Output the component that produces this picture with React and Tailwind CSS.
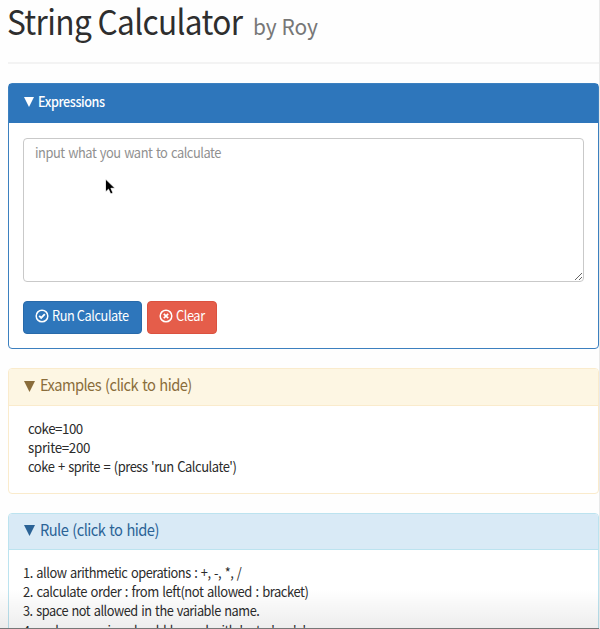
import React from "react";

function Triangle({ className }) {
  return (
    <svg className={className} viewBox="0 0 10 10" preserveAspectRatio="none" fill="currentColor" aria-hidden="true">
      <path d="M0 0H10L5 10Z" />
    </svg>
  );
}

function CircleIcon({ children }) {
  return (
    <svg className="h-[14px] w-[14px] shrink-0" viewBox="0 0 14 14" fill="none" stroke="currentColor" aria-hidden="true">
      <circle cx="7" cy="7" r="5.8" strokeWidth="1.5" />
      {children}
    </svg>
  );
}

function Cursor() {
  return (
    <svg className="absolute left-[104px] top-[177px] h-[20px] w-[13px]" viewBox="0 0 13 20" aria-hidden="true">
      <path d="M1.5 2V15L4.5 12.2L6.7 17L9 16L6.9 11.3H11Z" fill="#000" stroke="#fff" strokeWidth="0.8" />
    </svg>
  );
}

const examples = [
  { text: "coke=100", fit: "scale-x-[0.95] tracking-[-0.5px]" },
  { text: "sprite=200", fit: "scale-x-[0.95] tracking-[-0.3px]" },
  { text: "coke + sprite = (press 'run Calculate')", fit: "scale-x-[0.925] tracking-[-0.5px] [word-spacing:1.2px]" },
];

const rules = [
  { text: "1. allow arithmetic operations : +, -, *, /", fit: "scale-x-[0.915] tracking-[-0.5px]" },
  { text: "2. calculate order : from left(not allowed : bracket)", fit: "scale-x-[0.928] tracking-[-0.5px]" },
  { text: "3. space not allowed in the variable name.", fit: "scale-x-[0.91] tracking-[-0.5px]" },
  { text: "4. each expression should be end with 'enter' or '='", fit: "scale-x-[0.905] tracking-[-0.5px]" },
];

export default function App() {
  return (
    <div className="relative h-[629px] w-[600px] overflow-hidden border-r border-[#e9e9e9] bg-[#fefefe] pl-2 font-['Noto_Sans_CJK_KR','Noto_Sans',sans-serif] text-[14px] leading-[19.2px] text-[#2b2b2b]">
      <header className="h-16 border-b-2 border-[#f3f3f3]">
        <h1 className="flex h-[46px] items-baseline whitespace-nowrap text-[34px] leading-[44px] text-[#2e2e2e]">
          <span className="w-[236px] origin-left -translate-x-px -translate-y-px scale-x-[0.93] tracking-[-0.7px]">String Calculator</span>
          <small className="ml-[9px] origin-left -translate-y-px scale-x-[0.95] text-[22px] text-[#777]">by Roy</small>
        </h1>
      </header>

      <section className="mt-[19px] h-[266px] rounded-[4px] border border-[#3c80bf] bg-white">
        <div className="flex h-[39px] items-center bg-[#2e76bb] pl-[15px] text-white">
          <Triangle className="-mt-[3px] mr-[5px] h-[10px] w-[10px]" />
          <h2 className="-mt-[3px] origin-left -translate-x-px scale-x-[0.9] font-medium tracking-[-0.45px]">Expressions</h2>
        </div>
        <div className="px-[14px] pt-[15px]">
          <div className="relative">
            <textarea
              id="expressions"
              className="block h-[144px] w-full resize rounded-[4px] border border-[#c9c9c9] bg-white px-3 py-[5px] outline-none"
            />
            <label
              htmlFor="expressions"
              className="absolute left-3 top-[5px] origin-left scale-x-[0.917] whitespace-nowrap tracking-[-0.5px] text-[#909090] [word-spacing:1.2px]"
            >
              input what you want to calculate
            </label>
          </div>
          <div className="mt-[19px] flex gap-[5px]">
            <button className="flex h-[33px] w-[119px] items-center gap-[3px] whitespace-nowrap rounded-[4px] border border-[#286aaa] bg-[#2e76bb] pb-[3px] pl-[11px] text-white">
              <CircleIcon>
                <path d="M4.2 6.9L6.2 8.9L9.8 5.2" strokeWidth="1.9" />
              </CircleIcon>
              <span className="w-[78px] origin-left scale-x-[0.91] text-left tracking-[-0.45px]">Run Calculate</span>
            </button>
            <button className="flex h-[33px] w-[70px] items-center gap-[3px] whitespace-nowrap rounded-[4px] border border-[#db513f] bg-[#e55d4a] pb-[3px] pl-[11px] text-white">
              <CircleIcon>
                <path d="M4.8 4.8L9.2 9.2M9.2 4.8L4.8 9.2" strokeWidth="1.7" />
              </CircleIcon>
              <span className="origin-left scale-x-[0.91] tracking-[-0.45px]">Clear</span>
            </button>
          </div>
        </div>
      </section>

      <section className="mt-[19px] h-[126px] rounded-[4px] border border-[#faebcc] bg-white">
        <div className="flex h-[37px] items-center rounded-t-[3px] border-b border-[#faebcc] bg-[#fdf6e3] pl-[15px] text-[16px] text-[#8a6d3b]">
          <Triangle className="-mt-[2px] mr-[5px] h-[11px] w-[11px]" />
          <h2 className="-mt-[4px] origin-left scale-x-[0.917] tracking-[-0.6px] [word-spacing:1.5px]">Examples (click to hide)</h2>
        </div>
        <div className="pl-[19px] pt-[13px]">
          {examples.map(({ text, fit }) => (
            <p key={text} className={`origin-left whitespace-nowrap ${fit}`}>{text}</p>
          ))}
        </div>
      </section>

      <section className="mt-[19px] h-[180px] rounded-[4px] border border-[#bce3ef] bg-white">
        <div className="flex h-[36px] items-center rounded-t-[3px] border-b border-[#bce3ef] bg-[#d9eaf6] pl-[15px] text-[16px] text-[#2b6396]">
          <Triangle className="-mt-[2px] mr-[5px] h-[11px] w-[11px]" />
          <h2 className="-mt-[4px] origin-left scale-x-[0.915] tracking-[-0.6px] [word-spacing:1.5px]">Rule (click to hide)</h2>
        </div>
        <div className="pl-[14px] pt-[13px] [word-spacing:1.2px]">
          {rules.map(({ text, fit }) => (
            <p key={text} className={`origin-left whitespace-nowrap ${fit}`}>{text}</p>
          ))}
        </div>
      </section>

      <Cursor />
      <div className="pointer-events-none absolute inset-x-0 bottom-0 h-10 border-b border-[#777] bg-gradient-to-b from-transparent to-[#00000012]" />
    </div>
  );
}
